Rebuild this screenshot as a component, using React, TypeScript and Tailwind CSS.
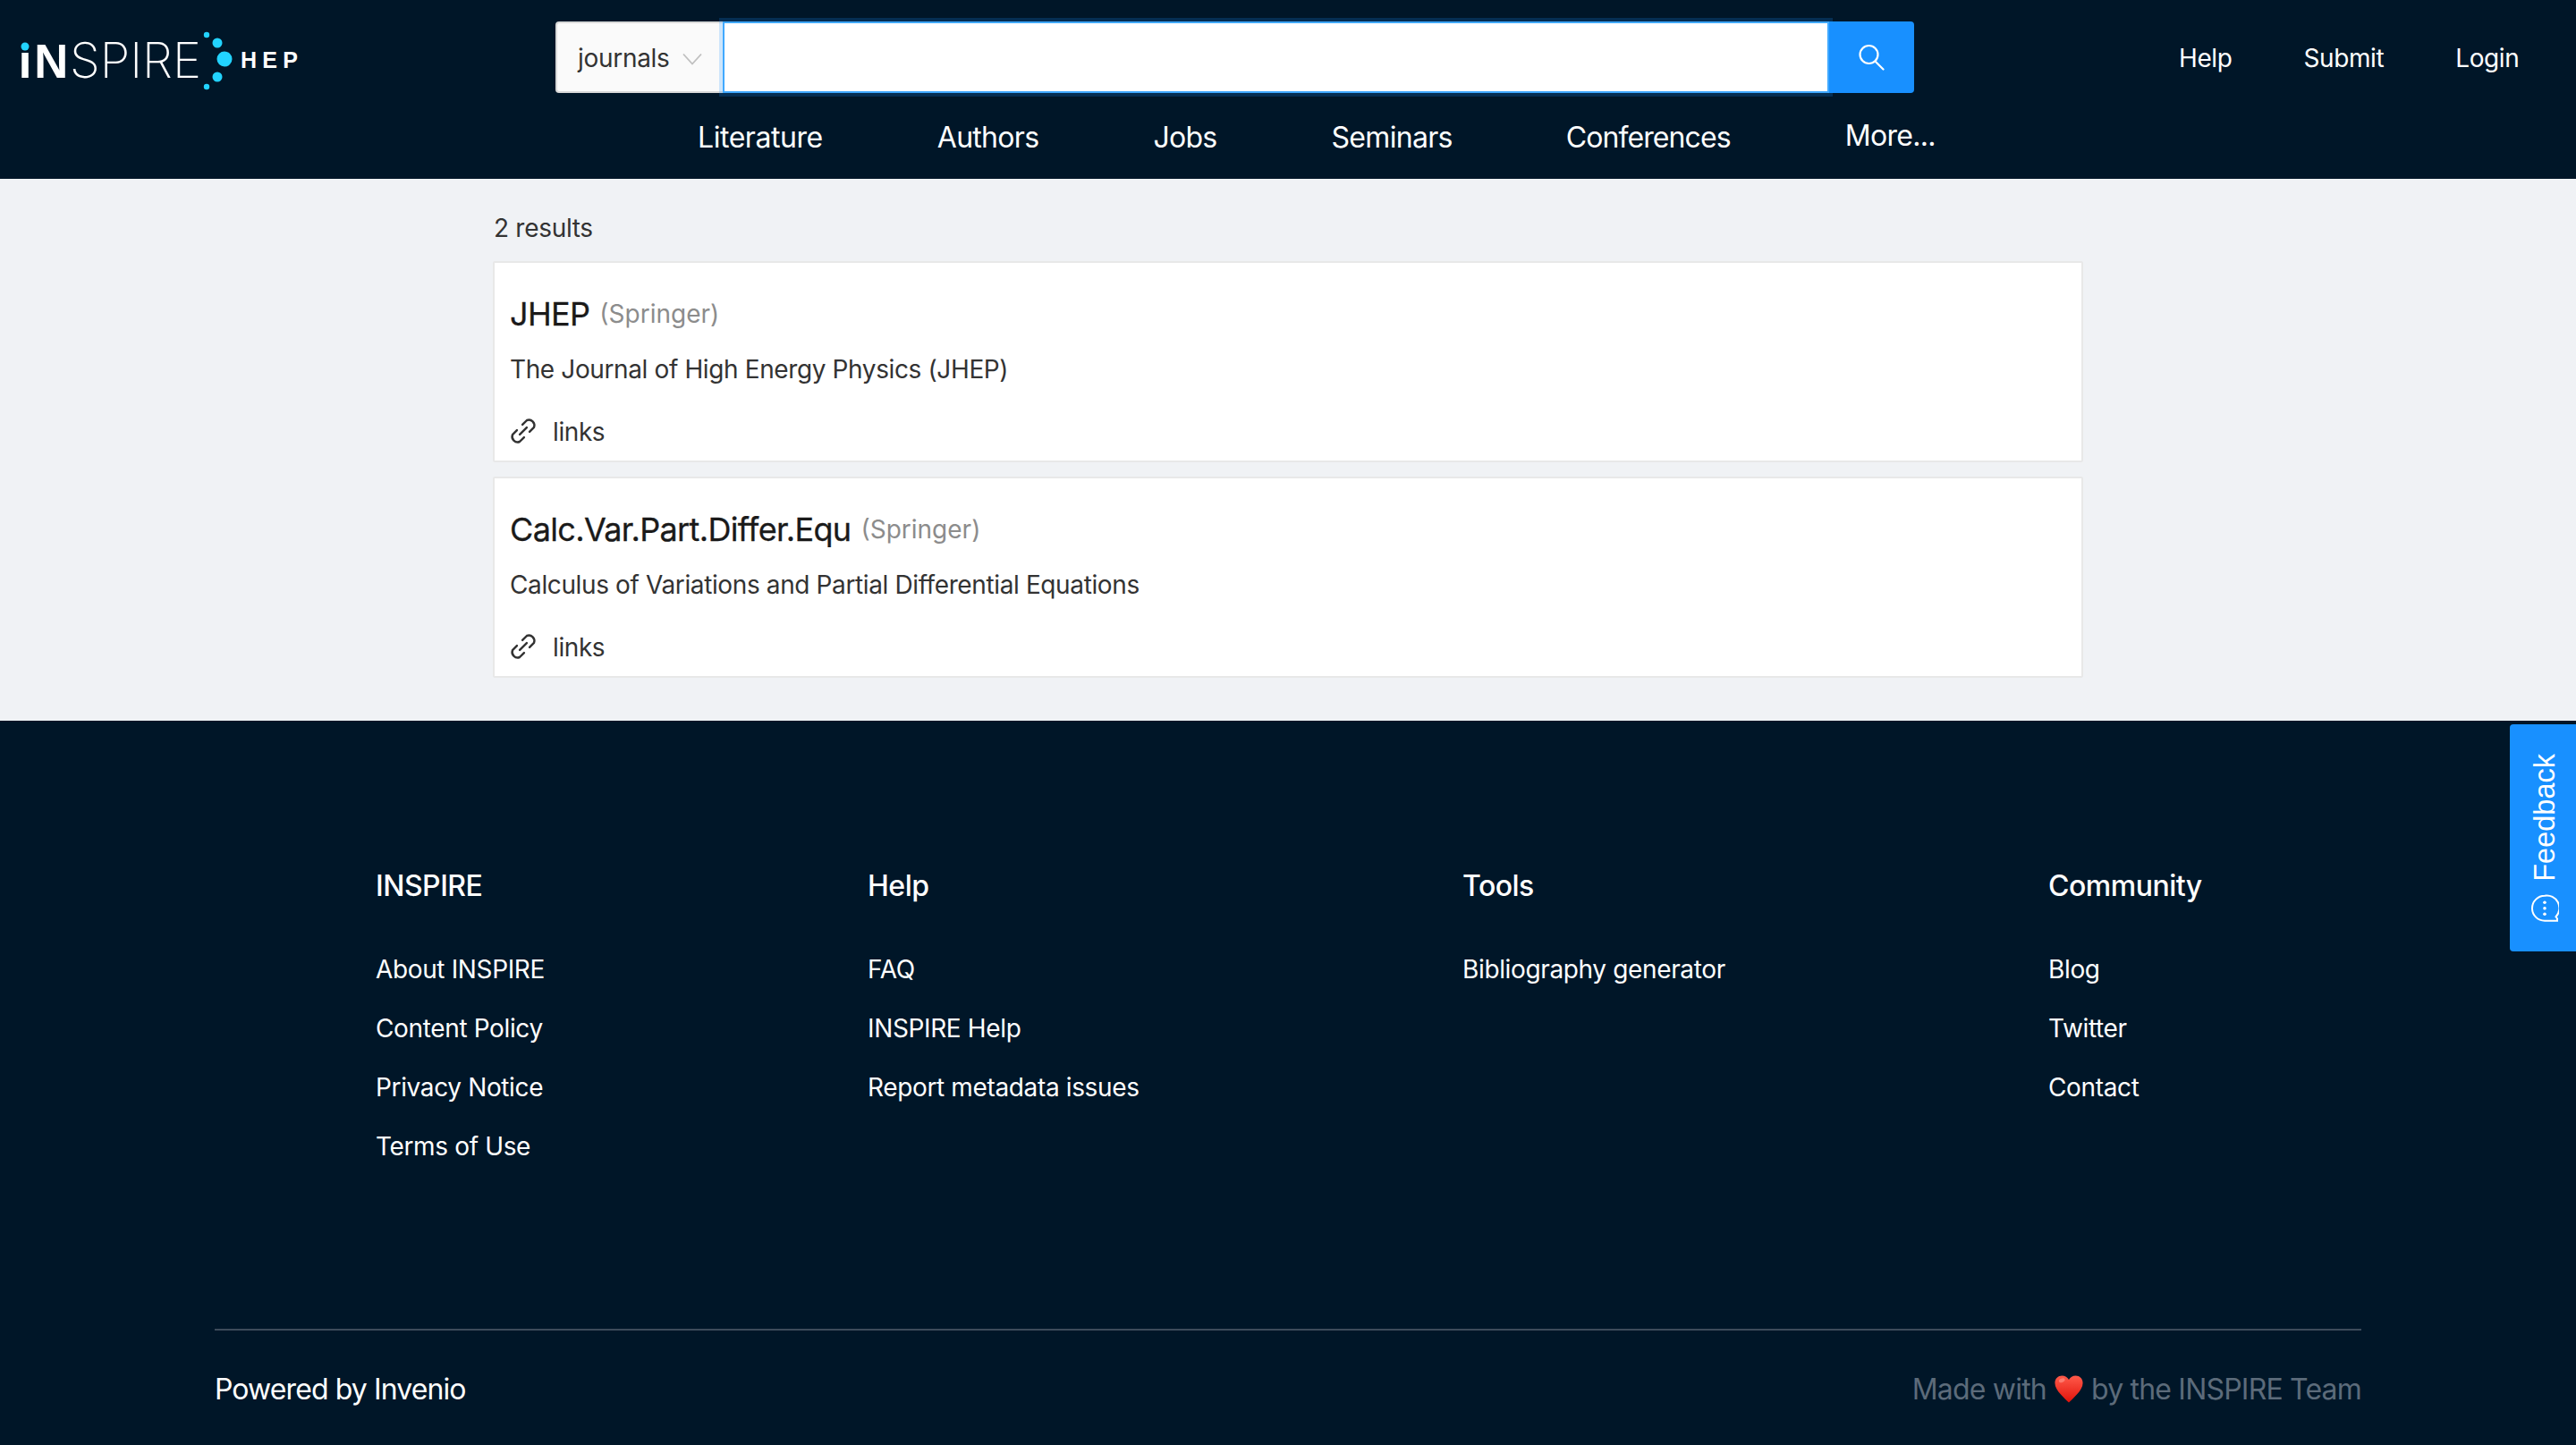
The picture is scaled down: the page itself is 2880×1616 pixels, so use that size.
const Logo = () => (
  <svg width="350" height="90" viewBox="0 0 350 90" className="block">
    <circle cx="28" cy="32" r="4.5" fill="#22d3ff" />
    <text x="20.400" y="67" fill="#fff" fontFamily="Liberation Sans" fontWeight="700" fontSize="54" textLength="15" lengthAdjust="spacingAndGlyphs">ı</text>
    <text x="38.300" y="67" fill="#fff" fontFamily="Liberation Sans" fontWeight="700" fontSize="54" textLength="38" lengthAdjust="spacingAndGlyphs">N</text>
    <text x="78" y="67" fill="#fff" fontFamily="Inter" fontWeight="250" fontSize="55" textLength="147" lengthAdjust="spacingAndGlyphs">SPIRE</text>
    <circle cx="231" cy="19" r="3.2" fill="#22d3ff" />
    <circle cx="243" cy="28" r="5.5" fill="#22d3ff" />
    <circle cx="251" cy="46" r="8.5" fill="#22d3ff" />
    <circle cx="243" cy="66" r="5.5" fill="#22d3ff" />
    <circle cx="231" cy="77" r="3.2" fill="#22d3ff" />
    <text x="269" y="56" fill="#fff" fontFamily="Liberation Sans" fontWeight="700" fontSize="25" textLength="64">HEP</text>
  </svg>
);

const LinkIcon = () => (
  <svg width="30" height="30" viewBox="3.500 3.500 17 17" fill="none" stroke="#333" strokeWidth="1.4" strokeLinecap="round" strokeLinejoin="round">
    <path d="M9.800 14.200l4.400-4.400" />
    <path d="M8 11.500l-2.800 2.800a3.500 3.500 0 0 0 4.500 4.500l2.800-2.800" />
    <path d="M11.500 8l2.800-2.800a3.500 3.500 0 0 1 4.500 4.500l-2.800 2.800" />
  </svg>
);

const Card = ({ title, desc, mt }: { title: string; desc: string; mt: string }) => (
  <div className={`${mt} h-[225px] rounded-[2px] border-2 border-[#e8e8e8] bg-white pl-[17px] pt-[32px]`}>
    <div className="flex h-[50px] items-center">
      <span className="text-[36px] leading-[50px] font-normal tracking-[-0.65px] text-[#1a1a1a] [-webkit-text-stroke:0.3px_#1a1a1a]">{title}</span>
      <span className="ml-[11px] text-[28px] leading-[50px] tracking-[0px] text-[#8c8c8c]">(Springer)</span>
    </div>
    <div className="mt-[15px] h-[44px] text-[28px] leading-[44px] tracking-[-0.38px] text-[#333]">{desc}</div>
    <div className="mt-[26px] flex h-[44px] items-center text-[28px] tracking-[-0.4px] text-[#333]">
      <span className="-mt-[2px] block h-[30px]"><LinkIcon /></span>
      <span className="ml-[18px]">links</span>
    </div>
  </div>
);

const Col = ({ title, width, items }: { title: string; width: string; items: string[] }) => (
  <div className={`${width} shrink-0`}>
    <div className="h-[44px] text-[32px] leading-[44px] font-medium tracking-[-0.5px] text-white">{title}</div>
    <div className="mt-[49px] flex flex-col gap-[22px]">
      {items.map((t) => (
        <div key={t} className="h-[44px] text-[28px] leading-[44px] tracking-[-0.36px] text-white">{t}</div>
      ))}
    </div>
  </div>
);

export default function App() {
  return (
    <div className="relative h-[1616px] w-[2880px] overflow-hidden bg-[#001628] font-['Inter',sans-serif]">
      <header className="h-[200px] bg-[#001628] pt-[24px]">
        <div className="flex h-[80px] items-center">
          <div className="w-[621px] shrink-0 mt-[2px]">
            <Logo />
          </div>
          <div className="flex h-[80px] w-[1519px] shrink-0">
            <div className="flex w-[187px] shrink-0 items-center rounded-l-[4px] border-2 border-r-0 border-[#d9d9d9] bg-[#fafafa] pl-[23px] pt-[1px] text-[28px] tracking-[-0.3px] text-[#333]">
              journals
              <svg width="22" height="14" viewBox="0 0 22 14" fill="none" stroke="#bfbfbf" strokeWidth="1.800" className="ml-[14px] mt-[2px]">
                <path d="M1 1.500l10 11 10-11" />
              </svg>
            </div>
            <div className="z-10 grow border-2 border-[#40a9ff] bg-white shadow-[0_0_0_4px_rgba(24,144,255,0.2)]" />
            <div className="z-20 flex w-[95px] shrink-0 items-center justify-center rounded-r-[4px] bg-[#1890ff]">
              <svg width="30" height="30" viewBox="0 0 30 30" fill="none" stroke="#fff" strokeWidth="2.200" strokeLinecap="round">
                <circle cx="11.500" cy="12" r="10" />
                <path d="M18.500 19.500l9 9" />
              </svg>
            </div>
          </div>
          <nav className="ml-[296px] mt-[2px] flex gap-[80px] text-[28px] tracking-[-0.4px] text-white">
            <span>Help</span>
            <span>Submit</span>
            <span>Login</span>
          </nav>
        </div>
        <nav className="mt-[28px] flex pl-[780px] text-[32px] leading-[44px] tracking-[-0.7px] text-white">
          <span className="mr-[128px] tracking-[-0.45px]">Literature</span>
          <span className="mr-[128px]">Authors</span>
          <span className="mr-[128px]">Jobs</span>
          <span className="mr-[127px]">Seminars</span>
          <span className="mr-[128px] tracking-[-0.9px]">Conferences</span>
          <span className="-mt-[2px]">More...</span>
        </nav>
      </header>

      <main className="h-[606px] bg-[#f0f2f5] pl-[551px] pt-[33px]">
        <div className="w-[1778px]">
          <div className="ml-[1px] h-[44px] text-[28px] leading-[44px] tracking-[-0.3px] text-[#333]">2 results</div>
          <Card mt="mt-[15px]" title="JHEP" desc="The Journal of High Energy Physics (JHEP)" />
          <Card mt="mt-[16px]" title="Calc.Var.Part.Differ.Equ" desc="Calculus of Variations and Partial Differential Equations" />
        </div>
      </main>

      <footer className="h-[810px] bg-[#001628] px-[240px] pt-[163px]">
        <div className="flex h-[517px] pl-[180px]">
          <Col title="INSPIRE" width="w-[550px]" items={["About INSPIRE", "Content Policy", "Privacy Notice", "Terms of Use"]} />
          <Col title="Help" width="w-[665px]" items={["FAQ", "INSPIRE Help", "Report metadata issues"]} />
          <Col title="Tools" width="w-[655px]" items={["Bibliography generator"]} />
          <Col title="Community" width="w-[300px]" items={["Blog", "Twitter", "Contact"]} />
        </div>
        <div className="h-[2px] bg-[#3d4b5a]" />
        <div className="mt-[44px] flex items-center justify-between text-[32px] leading-[44px] tracking-[-0.8px]">
          <span className="tracking-[-0.9px] text-white">Powered by Invenio</span>
          <span className="flex items-center text-[#5c6b7a]">
            Made with
            <svg width="34" height="34" viewBox="0 0 24 24" className="mx-[8px] -mt-[2px]">
              <defs>
                <linearGradient id="heart" x1="0" y1="0" x2="0" y2="1">
                  <stop offset="0" stopColor="#ff5a4a" />
                  <stop offset="1" stopColor="#e0120a" />
                </linearGradient>
              </defs>
              <path d="M12 23C9 19.500 1 13.500 1 7.500 1 4 3.600 1.800 6.600 1.800 9 1.800 11 3 12 5c1-2 3-3.200 5.400-3.200C20.400 1.800 23 4 23 7.500 23 13.500 15 19.500 12 23z" fill="url(#heart)" />
              <ellipse cx="6.500" cy="5.500" rx="2.500" ry="1.500" fill="#ff9a8f" opacity="0.6" transform="rotate(-25 6.500 5.500)" />
            </svg>
            by the INSPIRE Team
          </span>
        </div>
      </footer>

      <div className="absolute right-0 top-[810px] flex h-[254px] w-[74px] items-center justify-center rounded-l-[4px] bg-[#1890ff] pl-[4px]">
        <div className="flex -rotate-90 items-center gap-[14px] whitespace-nowrap font-['Liberation_Sans',sans-serif] text-[32.5px] text-white">
          <svg width="32" height="32" viewBox="0 0 32 32" fill="none" className="rotate-90">
            <path d="M16 2a14 14 0 1 0 0 28h14v-2.500l-1.500-2A14 14 0 0 0 16 2z" stroke="#fff" strokeWidth="2" />
            <circle cx="16" cy="9.500" r="1.800" fill="#fff" />
            <circle cx="16" cy="16" r="1.800" fill="#fff" />
            <circle cx="16" cy="22.500" r="1.800" fill="#fff" />
          </svg>
          Feedback
        </div>
      </div>
    </div>
  );
}
